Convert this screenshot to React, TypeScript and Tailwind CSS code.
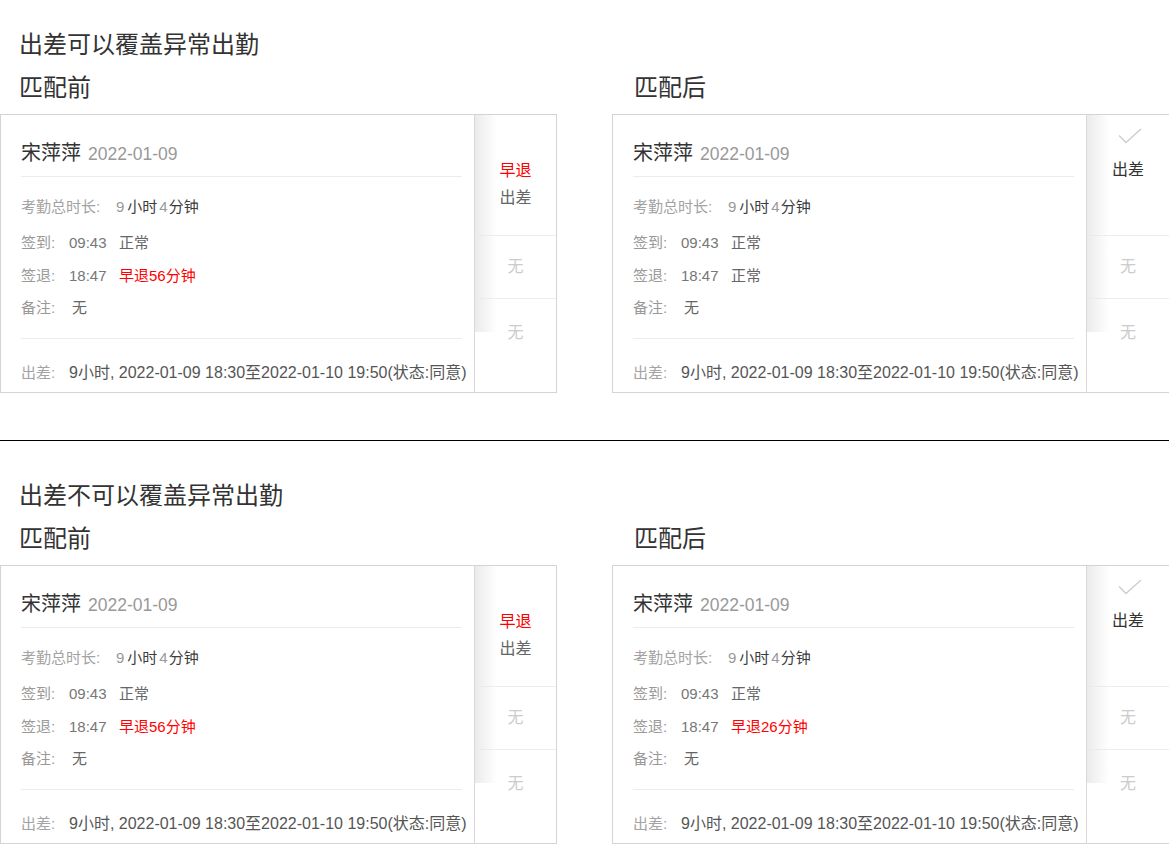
import React from "react";

type Side = {
  lateText: string | null;
  after: boolean;
};

function CheckIcon() {
  return (
    <svg width="24" height="16" viewBox="0 0 24 16" fill="none">
      <polyline
        points="1,7.5 8,14.5 23,1"
        stroke="#cfcfcf"
        strokeWidth="1.6"
        strokeLinejoin="miter"
      />
    </svg>
  );
}

function Card({ lateText, after }: Side) {
  return (
    <div className="flex h-[279px] border border-[#d4d4d4] bg-white">
      <div className="w-[474px] shrink-0 flex flex-col pl-[20px] pr-[12px] pt-[26px] border-r border-[#d8d8d8]">
        <div className="flex items-baseline h-[24px] leading-[24px]">
          <span className="text-[20px] text-[#333]">宋萍萍</span>
          <span className="ml-[7px] text-[17.5px] text-[#999]">2022-01-09</span>
        </div>
        <div className="mt-[11px] h-px bg-[#ececec]" />

        <div className="mt-[20px] h-[20px] leading-[20px] text-[15px] flex">
          <span className="w-[95px] shrink-0 text-[#a3a3a3]">考勤总时长:</span>
          <span className="text-[#999]">9</span>
          <span className="ml-[3px] text-[#3c3c3c]">小时</span>
          <span className="ml-[2px] text-[#999]">4</span>
          <span className="ml-[1px] text-[#3c3c3c]">分钟</span>
        </div>
        <div className="mt-[16px] h-[20px] leading-[20px] text-[15px] flex">
          <span className="w-[48px] shrink-0 text-[#999]">签到:</span>
          <span className="w-[50px] shrink-0 text-[#777]">09:43</span>
          <span className="text-[#666]">正常</span>
        </div>
        <div className="mt-[13px] h-[20px] leading-[20px] text-[15px] flex">
          <span className="w-[48px] shrink-0 text-[#999]">签退:</span>
          <span className="w-[50px] shrink-0 text-[#777]">18:47</span>
          {lateText ? (
            <span className="text-[#ff0000]">{lateText}</span>
          ) : (
            <span className="text-[#666]">正常</span>
          )}
        </div>
        <div className="mt-[12px] h-[20px] leading-[20px] text-[15px] flex">
          <span className="w-[51px] shrink-0 text-[#999]">备注:</span>
          <span className="text-[#666]">无</span>
        </div>

        <div className="mt-[20px] h-px bg-[#ececec]" />
        <div className="mt-[23px] h-[22px] leading-[22px] flex whitespace-nowrap">
          <span className="w-[48px] shrink-0 text-[15px] text-[#a3a3a3]">出差:</span>
          <span className="shrink-0 text-[16px] text-[#555]">
            9小时, 2022-01-09 18:30至2022-01-10 19:50(状态:同意)
          </span>
        </div>
      </div>

      <div className="relative flex-1 flex flex-col text-[16px]">
        <div className="h-[121px] border-b border-[#ececec] flex flex-col items-center">
          {after ? (
            <>
              <div className="mt-[13px] ml-[4px] h-[16px]">
                <CheckIcon />
              </div>
              <div className="mt-[15px] leading-[22px] text-[#333]">出差</div>
            </>
          ) : (
            <>
              <div className="mt-[45px] leading-[22px] text-[#ff0000]">早退</div>
              <div className="mt-[5px] leading-[22px] text-[#666]">出差</div>
            </>
          )}
        </div>
        <div className="h-[63px] border-b border-[#ececec] flex items-center justify-center text-[#cccccc]">
          无
        </div>
        <div className="flex-1 flex justify-center pt-[23px] leading-[22px] text-[#cccccc]">
          无
        </div>
        <div className="absolute left-0 top-0 h-[217px] w-[22px] bg-linear-to-r from-[#ebebeb] to-transparent pointer-events-none" />
      </div>
    </div>
  );
}

function Section({
  title,
  top,
  rightLate,
}: {
  title: string;
  top: string;
  rightLate: string | null;
}) {
  return (
    <section className={top}>
      <h2 className="pl-[19px] text-[24px] leading-[32px] text-[#333]">{title}</h2>
      <div className="mt-[11px] flex gap-[55px]">
        <div className="w-[557px] shrink-0">
          <h3 className="pl-[19px] text-[24px] leading-[32px] text-[#333]">匹配前</h3>
          <div className="mt-[10px]">
            <Card lateText="早退56分钟" after={false} />
          </div>
        </div>
        <div className="w-[558px] shrink-0">
          <h3 className="pl-[22px] text-[24px] leading-[32px] text-[#333]">匹配后</h3>
          <div className="mt-[10px]">
            <Card lateText={rightLate} after={true} />
          </div>
        </div>
      </div>
    </section>
  );
}

export default function App() {
  return (
    <main
      className="min-h-screen bg-white overflow-hidden"
      style={{ fontFamily: '"Liberation Sans", "Noto Sans CJK SC", sans-serif' }}
    >
      <Section title="出差可以覆盖异常出勤" top="pt-[29px]" rightLate={null} />
      <div className="mt-[47px] h-px bg-black" />
      <Section title="出差不可以覆盖异常出勤" top="pt-[39px]" rightLate="早退26分钟" />
    </main>
  );
}
